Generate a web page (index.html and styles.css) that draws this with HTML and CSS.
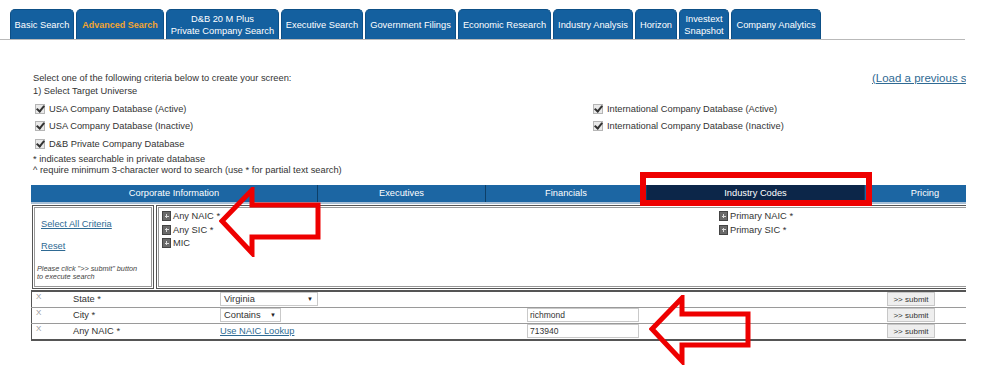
FILE: index.html
```html
<!DOCTYPE html>
<html lang="en">
<head>
    <meta charset="UTF-8">
    <title>Advanced Search</title>
    <link rel="stylesheet" href="styles.css">
</head>
<body>
    <div class="page">
        <div class="tabs">
            <a class="tab" style="width:64px">Basic Search</a>
            <a class="tab tab-active" style="width:88px">Advanced Search</a>
            <a class="tab" style="width:113px">D&amp;B 20 M Plus<br>Private Company Search</a>
            <a class="tab" style="width:82px">Executive Search</a>
            <a class="tab" style="width:91px">Government Filings</a>
            <a class="tab" style="width:93px">Economic Research</a>
            <a class="tab" style="width:80px">Industry Analysis</a>
            <a class="tab" style="width:42px">Horizon</a>
            <a class="tab" style="width:50px">Investext<br>Snapshot</a>
            <a class="tab" style="width:90px">Company Analytics</a>
        </div>

        <div class="intro">
            <div class="intro-text">
                <p>Select one of the following criteria below to create your screen:</p>
                <p>1) Select Target Universe</p>
            </div>
            <a class="load-link" href="#">(Load a previous screen)</a>
        </div>

        <div class="universe">
            <div class="universe-col">
                <label class="check"><span class="box"></span>USA Company Database (Active)</label>
                <label class="check"><span class="box"></span>USA Company Database (Inactive)</label>
                <label class="check"><span class="box"></span>D&amp;B Private Company Database</label>
            </div>
            <div class="universe-col right">
                <label class="check"><span class="box"></span>International Company Database (Active)</label>
                <label class="check"><span class="box"></span>International Company Database (Inactive)</label>
            </div>
        </div>
        <div class="notes">
            <p>* indicates searchable in private database</p>
            <p>^ require minimum 3-character word to search (use * for partial text search)</p>
        </div>

        <div class="criteria">
            <div class="cat-bar">
                <div class="cat" style="width:287px">Corporate Information</div>
                <div class="cat" style="width:168px">Executives</div>
                <div class="cat" style="width:161px">Financials</div>
                <div class="cat cat-active" style="width:218px">Industry Codes</div>
                <div class="cat cat-last" style="width:120px">Pricing</div>
            </div>

            <div class="panel">
                <div class="panel-left">
                    <a href="#">Select All Criteria</a>
                    <a href="#">Reset</a>
                    <p class="hint">Please click "&gt;&gt; submit" button<br>to execute search</p>
                </div>
                <div class="panel-right">
                    <div class="field-col">
                        <div class="field"><span class="plus"></span>Any NAIC *</div>
                        <div class="field"><span class="plus"></span>Any SIC *</div>
                        <div class="field"><span class="plus"></span>MIC</div>
                    </div>
                    <div class="field-col second">
                        <div class="field"><span class="plus"></span>Primary NAIC *</div>
                        <div class="field"><span class="plus"></span>Primary SIC *</div>
                    </div>
                </div>
            </div>

            <table class="rows">
                <tr>
                    <td class="del">X</td>
                    <td class="name">State *</td>
                    <td class="op"><span class="select" style="width:98px">Virginia<i>&#9660;</i></span></td>
                    <td class="val"></td>
                    <td class="btn"><button>&gt;&gt; submit</button></td>
                </tr>
                <tr>
                    <td class="del">X</td>
                    <td class="name">City *</td>
                    <td class="op"><span class="select" style="width:61px">Contains<i>&#9660;</i></span></td>
                    <td class="val"><span class="input">richmond</span></td>
                    <td class="btn"><button>&gt;&gt; submit</button></td>
                </tr>
                <tr>
                    <td class="del">X</td>
                    <td class="name">Any NAIC *</td>
                    <td class="op"><a href="#">Use NAIC Lookup</a></td>
                    <td class="val"><span class="input">713940</span></td>
                    <td class="btn"><button>&gt;&gt; submit</button></td>
                </tr>
            </table>
        </div>

        <!-- annotations drawn over the screenshot -->
        <div class="mark-box"></div>
        <svg class="arrow arrow-one" width="104" height="70" viewBox="0 0 104 70">
            <polygon points="3,34 33,3 33,18 99,18 99,50 33,50 33,66" fill="none" stroke="#ee0000" stroke-width="5" stroke-linejoin="miter"/>
        </svg>
        <svg class="arrow arrow-two" width="104" height="70" viewBox="0 0 104 70">
            <polygon points="3,34 33,3 33,19 99,19 99,50 33,50 33,66" fill="none" stroke="#ee0000" stroke-width="5" stroke-linejoin="miter"/>
        </svg>
    </div>
</body>
</html>
```

FILE: styles.css
```css
body {
    margin: 0;
    font-family: 'Liberation Sans', Arial, sans-serif;
    font-size: 9.3px;
    color: #333;
    background: #fff;
}
p {
    margin: 0;
}
a {
    color: #2f6a93;
}
.page {
    position: relative;
    width: 966px;
    height: 378px;
    overflow: hidden;
}

/* top tabs */
.tabs {
    display: flex;
    gap: 2px;
    padding: 9px 0 0 10px;
    border-bottom: 1px solid #b9b9b9;
    margin-right: 1px;
}
.tab {
    flex: none;
    height: 30px;
    box-sizing: border-box;
    display: flex;
    align-items: center;
    justify-content: center;
    text-align: center;
    font-size: 9.3px;
    line-height: 12px;
    color: #fff;
    background: #14609f;
    border: 1px solid #0d4f86;
    border-bottom: none;
    border-radius: 5px 5px 0 0;
}
.tab-active {
    color: #f2a531;
    font-weight: bold;
    font-size: 9px;
}

/* intro */
.intro {
    display: flex;
    padding: 32px 0 0 33px;
    line-height: 13px;
}
.intro-text {
    flex: none;
    width: 839px;
}
.load-link {
    flex: none;
    white-space: nowrap;
    font-size: 11.5px;
}
.universe {
    display: flex;
    padding: 2px 0 0 35px;
}
.universe-col {
    flex: none;
    width: 558px;
}
.check {
    display: flex;
    align-items: center;
    height: 17.5px;
}
.box {
    flex: none;
    width: 8px;
    height: 8px;
    margin-right: 4px;
    border: 1px solid #b5b5b5;
    background: #e9e9e9;
    position: relative;
}
.box::after {
    content: "";
    position: absolute;
    left: 2px;
    top: -1px;
    width: 3px;
    height: 6px;
    border: solid #333;
    border-width: 0 2px 2px 0;
    transform: rotate(40deg);
}
.notes {
    padding: 1px 0 0 33px;
    line-height: 11px;
}

/* criteria area */
.criteria {
    margin: 9px 0 0 31px;
    width: 954px;
}
.cat-bar {
    display: flex;
    height: 17px;
    background: #1c66a3;
    border-bottom: 2px solid #a9c0d6;
}
.cat {
    flex: none;
    box-sizing: border-box;
    border-right: 1px solid #0d3f68;
    color: #fff;
    line-height: 17px;
    text-align: center;
}
.cat-active {
    background: #0c2649;
}
.cat-last {
    border-right: none;
}
.panel {
    display: flex;
    gap: 2px;
    margin-top: 1px;
    height: 84px;
}
.panel-left, .panel-right {
    box-sizing: border-box;
    border: 1px solid #555;
    outline: 1px solid #999;
    outline-offset: -3px;
}
.panel-left {
    flex: none;
    width: 122px;
    margin-left: 1px;
    padding: 13px 3px 0 8px;
    display: flex;
    flex-direction: column;
    align-items: flex-start;
    white-space: nowrap;
}
.panel-left a {
    margin-bottom: 12px;
}
.hint {
    margin: 2px 0 0 -4px;
    font-size: 7.3px;
    line-height: 8px;
    font-style: italic;
    color: #444;
}
.panel-right {
    flex: 1;
    display: flex;
    padding: 4px 0 0 5px;
}
.field-col {
    flex: none;
    width: 557px;
}
.field {
    display: flex;
    align-items: center;
    height: 13.5px;
    white-space: nowrap;
}
.plus {
    flex: none;
    width: 7px;
    height: 8px;
    margin-right: 2px;
    background: #6a6a6a;
    border: 1px solid #444;
    position: relative;
}
.plus::before, .plus::after {
    content: "";
    position: absolute;
    background: #ddd;
}
.plus::before {
    left: 1.5px;
    top: 3.5px;
    width: 4px;
    height: 1px;
}
.plus::after {
    left: 3px;
    top: 2px;
    width: 1px;
    height: 4px;
}

/* criteria rows */
.rows {
    width: 954px;
    border-collapse: collapse;
    table-layout: fixed;
    margin-top: 1px;
    border-top: 2px solid #555;
    border-bottom: 2px solid #555;
    border-left: 1px solid #555;
}
.rows td {
    height: 15px;
    padding: 0;
    border-top: 1px solid #9a9a9a;
    vertical-align: middle;
    white-space: nowrap;
}
.rows tr:first-child td {
    border-top: none;
}
.del {
    width: 37px;
    padding-left: 4px !important;
    color: #999;
    font-size: 8px;
    vertical-align: top !important;
}
.name {
    width: 147px;
}
.op {
    width: 307px;
}
.val {
    width: 360px;
}
.select {
    display: inline-flex;
    justify-content: space-between;
    align-items: center;
    box-sizing: border-box;
    height: 14px;
    padding: 0 4px 0 3px;
    border: 1px solid #c9c9c9;
    background: #fff;
    color: #333;
    vertical-align: middle;
}
.select i {
    font-style: normal;
    font-size: 6px;
    color: #222;
}
.input {
    display: block;
    box-sizing: border-box;
    width: 112px;
    height: 14px;
    padding-left: 2px;
    border: 1px solid #c9c9c9;
    font-size: 8.5px;
    line-height: 12px;
}
.btn button {
    display: block;
    width: 48px;
    height: 14px;
    padding: 0;
    font-family: inherit;
    font-size: 8px;
    color: #333;
    background: #eee;
    border: 1px solid #c7c7c7;
}

/* red annotations */
.mark-box {
    position: absolute;
    left: 640px;
    top: 172px;
    width: 220px;
    height: 22px;
    border: 6px solid #ee0000;
}
.arrow {
    position: absolute;
}
.arrow-one {
    left: 219px;
    top: 187px;
}
.arrow-two {
    left: 649px;
    top: 295px;
}
```
